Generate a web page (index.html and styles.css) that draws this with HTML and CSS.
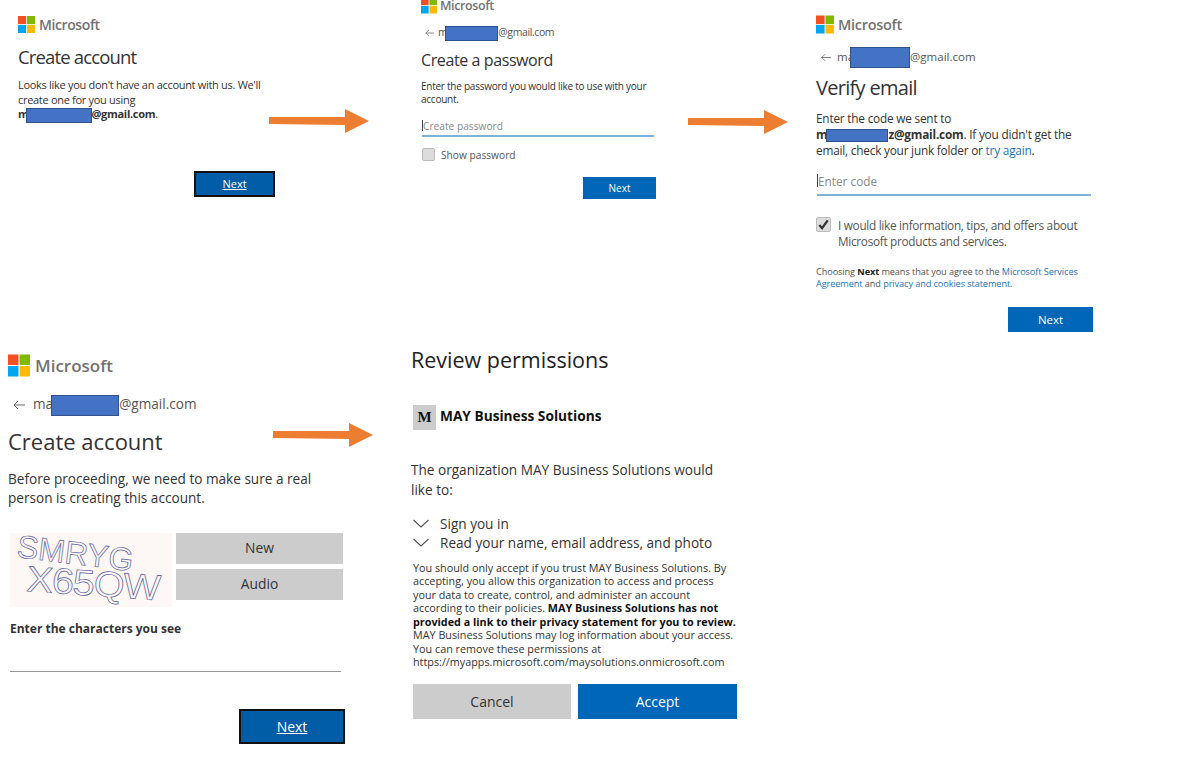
FILE: index.html
```html
<!DOCTYPE html>
<html lang="en">
<head>
    <meta charset="UTF-8">
    <meta name="viewport" content="width=device-width, initial-scale=1.0">
    <title>Account sign up steps</title>
    <link rel="stylesheet" href="styles.css">
</head>
<body>
    <!-- Step 1 -->
    <section class="panel panel-one">
        <div class="brand">
            <svg class="ms-logo" viewBox="0 0 21 21"><rect width="10" height="10" fill="#f25022"/><rect x="11" width="10" height="10" fill="#7fba00"/><rect y="11" width="10" height="10" fill="#00a4ef"/><rect x="11" y="11" width="10" height="10" fill="#ffb900"/></svg>
            <span>Microsoft</span>
        </div>
        <h1>Create account</h1>
        <p class="text">Looks like you don't have an account with us. We'll<br>create one for you using<br><b>m<span class="redact"></span>@gmail.com</b>.</p>
        <div class="actions"><a class="btn btn-outlined" href="#">Next</a></div>
    </section>

    <svg class="arrow arrow-one" viewBox="0 0 100 24"><path d="M0 8 L76 8 L76 0 L100 12 L76 24 L76 16 L0 15 Z" fill="#ed7d31"/></svg>

    <!-- Step 2 -->
    <section class="panel panel-two">
        <div class="brand">
            <svg class="ms-logo" viewBox="0 0 21 21"><rect width="10" height="10" fill="#f25022"/><rect x="11" width="10" height="10" fill="#7fba00"/><rect y="11" width="10" height="10" fill="#00a4ef"/><rect x="11" y="11" width="10" height="10" fill="#ffb900"/></svg>
            <span>Microsoft</span>
        </div>
        <div class="identity">
            <svg class="back" viewBox="0 0 12 10"><path d="M5 1 L1 5 L5 9 M1 5 H12" fill="none" stroke="#666" stroke-width="1"/></svg>
            <span>m<span class="redact"></span>@gmail.com</span>
        </div>
        <h1>Create a password</h1>
        <p class="text">Enter the password you would like to use with your<br>account.</p>
        <div class="field"><i class="caret"></i>Create password</div>
        <label class="check-row"><i class="check"></i>Show password</label>
        <div class="actions"><a class="btn" href="#">Next</a></div>
    </section>

    <svg class="arrow arrow-two" viewBox="0 0 100 24"><path d="M0 8 L76 8 L76 0 L100 12 L76 24 L76 16 L0 15 Z" fill="#ed7d31"/></svg>

    <!-- Step 3 -->
    <section class="panel panel-three">
        <div class="brand">
            <svg class="ms-logo" viewBox="0 0 21 21"><rect width="10" height="10" fill="#f25022"/><rect x="11" width="10" height="10" fill="#7fba00"/><rect y="11" width="10" height="10" fill="#00a4ef"/><rect x="11" y="11" width="10" height="10" fill="#ffb900"/></svg>
            <span>Microsoft</span>
        </div>
        <div class="identity">
            <svg class="back" viewBox="0 0 12 10"><path d="M5 1 L1 5 L5 9 M1 5 H12" fill="none" stroke="#666" stroke-width="1"/></svg>
            <span>ma<span class="redact"></span>@gmail.com</span>
        </div>
        <h1>Verify email</h1>
        <p class="text">Enter the code we sent to<br><b>m<span class="redact redact-small"></span>z@gmail.com</b>. If you didn't get the<br>email, check your junk folder or <a href="#">try again</a>.</p>
        <div class="field"><i class="caret"></i>Enter code</div>
        <label class="check-row">
            <i class="check checked"><svg viewBox="0 0 14 14"><path d="M2.5 7.5 L5.5 11 L11.5 2.5" fill="none" stroke="#333" stroke-width="2.4"/></svg></i>
            <span>I would like information, tips, and offers about<br>Microsoft products and services.</span>
        </label>
        <p class="legal">Choosing <b>Next</b> means that you agree to the <a href="#">Microsoft Services<br>Agreement</a> and <a href="#">privacy and cookies statement.</a></p>
        <div class="actions"><a class="btn" href="#">Next</a></div>
    </section>

    <!-- Step 4 -->
    <section class="panel panel-four">
        <div class="brand">
            <svg class="ms-logo" viewBox="0 0 21 21"><rect width="10" height="10" fill="#f25022"/><rect x="11" width="10" height="10" fill="#7fba00"/><rect y="11" width="10" height="10" fill="#00a4ef"/><rect x="11" y="11" width="10" height="10" fill="#ffb900"/></svg>
            <span>Microsoft</span>
        </div>
        <div class="identity">
            <svg class="back" viewBox="0 0 12 10"><path d="M5 1 L1 5 L5 9 M1 5 H12" fill="none" stroke="#666" stroke-width="1"/></svg>
            <span>ma<span class="redact"></span>@gmail.com</span>
        </div>
        <h1>Create account</h1>
        <p class="text">Before proceeding, we need to make sure a real<br>person is creating this account.</p>
        <div class="captcha-row">
            <svg class="captcha" viewBox="0 0 162 74">
                <rect width="162" height="74" fill="#fdf7f6"/>
                <text class="captcha-text" transform="translate(6 24) rotate(7)">SMRYG</text>
                <text class="captcha-text captcha-low" transform="translate(16 58) rotate(4) scale(1.1 1)" letter-spacing="-1">X65QW</text>
            </svg>
            <div class="captcha-buttons">
                <a class="btn-gray" href="#">New</a>
                <a class="btn-gray" href="#">Audio</a>
            </div>
        </div>
        <p class="captcha-label">Enter the characters you see</p>
        <div class="captcha-input"></div>
        <div class="actions"><a class="btn btn-outlined" href="#">Next</a></div>
    </section>

    <svg class="arrow arrow-three" viewBox="0 0 100 24"><path d="M0 8 L76 8 L76 0 L100 12 L76 24 L76 16 L0 15 Z" fill="#ed7d31"/></svg>

    <!-- Step 5 -->
    <section class="panel panel-five">
        <h1>Review permissions</h1>
        <div class="org">
            <span class="org-badge">M</span>
            <b>MAY Business Solutions</b>
        </div>
        <p class="text">The organization MAY Business Solutions would<br>like to:</p>
        <ul class="scopes">
            <li><svg viewBox="0 0 16 9"><path d="M0.5 1 L8 8 L15.5 1" fill="none" stroke="#555" stroke-width="1.1"/></svg>Sign you in</li>
            <li><svg viewBox="0 0 16 9"><path d="M0.5 1 L8 8 L15.5 1" fill="none" stroke="#555" stroke-width="1.1"/></svg>Read your name, email address, and photo</li>
        </ul>
        <p class="notice">You should only accept if you trust MAY Business Solutions. By<br>accepting, you allow this organization to access and process<br>your data to create, control, and administer an account<br>according to their policies. <b>MAY Business Solutions has not<br>provided a link to their privacy statement for you to review.</b><br>MAY Business Solutions may log information about your access.<br>You can remove these permissions at<br>https://myapps.microsoft.com/maysolutions.onmicrosoft.com</p>
        <div class="consent">
            <a class="consent-btn cancel" href="#">Cancel</a>
            <a class="consent-btn accept" href="#">Accept</a>
        </div>
    </section>
</body>
</html>
```

FILE: styles.css
```css
body {
    margin: 0;
    width: 1200px;
    height: 759px;
    position: relative;
    overflow: hidden;
    background: #fff;
    color: #333;
    font-family: "Open Sans", "Noto Sans", sans-serif;
}

/* Pasted screenshots on a free canvas */
.panel {
    position: absolute;
}

.arrow {
    position: absolute;
    width: 100px;
    height: 24px;
}

.arrow-one { left: 269px; top: 109px; }
.arrow-two { left: 688px; top: 110px; }
.arrow-three { left: 273px; top: 423px; }

a {
    color: #1b75b9;
    text-decoration: none;
}

h1 {
    margin: 0;
    font-weight: 400;
    white-space: nowrap;
}

p {
    margin: 0;
    white-space: nowrap;
}

.brand {
    display: flex;
    align-items: center;
    color: #737373;
    font-weight: 600;
    line-height: 1;
}

.identity {
    display: flex;
    align-items: center;
    color: #555;
    white-space: nowrap;
}

.back {
    flex: none;
}

.redact {
    display: inline-block;
    vertical-align: middle;
    background: #4472c4;
    border: 1px solid #2f528f;
    box-sizing: border-box;
}

.actions {
    display: flex;
    justify-content: flex-end;
}

.btn {
    display: flex;
    align-items: center;
    justify-content: center;
    background: #0067b8;
    color: #fff;
    box-sizing: border-box;
}

.btn-outlined {
    background: #005da6;
    border: 2px solid #111;
    text-decoration: underline;
}

.field {
    display: flex;
    align-items: center;
    color: #8a8a8a;
    box-sizing: border-box;
    border-bottom: 2px solid #7fb2d8;
}

.caret {
    width: 1px;
    height: 13px;
    background: #444;
}

.check-row {
    display: flex;
    align-items: center;
    color: #555;
    white-space: nowrap;
}

.check {
    flex: none;
    display: block;
    box-sizing: border-box;
    background: #dcdcdc;
    border: 1px solid #bbb;
    border-radius: 2px;
}

.check svg {
    display: block;
}

/* Step 1 */
.panel-one {
    left: 18px;
    top: 16px;
    width: 257px;
}

.panel-one .brand { font-size: 14px; letter-spacing: -0.4px; height: 17px; gap: 4px; }
.panel-one .ms-logo { width: 17px; height: 17px; }
.panel-one h1 { font-size: 18.5px; letter-spacing: -0.85px; line-height: 24px; margin-top: 12px; }
.panel-one .text { font-size: 11px; letter-spacing: -0.3px; line-height: 14.6px; margin-top: 9px; }
.panel-one .redact { width: 66px; height: 15px; margin-left: -3px; }
.panel-one .actions { margin-top: 48px; }
.panel-one .btn { width: 81px; height: 26px; font-size: 11px; }

/* Step 2, its top is cut by the canvas edge */
.panel-two {
    left: 421px;
    top: 0;
    width: 235px;
}

.panel-two .brand { font-size: 12.5px; letter-spacing: -0.4px; height: 14px; gap: 3px; align-items: flex-start; }
.panel-two .ms-logo { width: 16px; height: 17px; margin-top: -3px; }
.panel-two .identity { font-size: 10.5px; letter-spacing: -0.4px; height: 16px; margin-top: 11px; }
.panel-two .back { width: 9px; height: 8px; margin: 0 4px 0 4px; }
.panel-two .redact { width: 53px; height: 15px; margin-left: -2px; }
.panel-two h1 { font-size: 16px; letter-spacing: -0.4px; line-height: 22px; margin-top: 8px; }
.panel-two .text { font-size: 10px; letter-spacing: -0.25px; line-height: 13.4px; margin-top: 9px; }
.panel-two .field { margin: 10px 2px 0 1px; height: 20px; font-size: 10.2px; }
.panel-two .caret { height: 11px; }
.panel-two .check-row { font-size: 10.2px; gap: 6px; margin-top: 11px; margin-left: 1px; }
.panel-two .check { width: 13px; height: 13px; }
.panel-two .actions { margin-top: 15px; }
.panel-two .btn { width: 73px; height: 22px; font-size: 10px; }

/* Step 3 */
.panel-three {
    left: 816px;
    top: 15px;
    width: 277px;
}

.panel-three .brand { font-size: 14.5px; letter-spacing: -0.3px; height: 19px; gap: 4px; }
.panel-three .brand span { padding-top: 1px; }
.panel-three .ms-logo { width: 18px; height: 19px; }
.panel-three .identity { font-size: 11.5px; height: 18px; margin-top: 14px; }
.panel-three .back { width: 10px; height: 9px; margin: 0 6px 0 5px; }
.panel-three .redact { width: 60px; height: 21px; margin-left: -4px; }
.panel-three h1 { font-size: 20px; letter-spacing: -0.7px; line-height: 28px; margin-top: 8px; }
.panel-three .text { font-size: 11.8px; letter-spacing: -0.2px; line-height: 16px; margin-top: 8px; }
.panel-three .redact-small { width: 62px; height: 13px; margin-left: -1px; }
.panel-three .field { margin: 9px 2px 0 1px; height: 29px; font-size: 11.8px; }
.panel-three .check-row { align-items: flex-start; font-size: 11.8px; letter-spacing: -0.3px; line-height: 16px; gap: 7px; margin-top: 21px; }
.panel-three .check { width: 15px; height: 15px; }
.panel-three .legal { font-size: 9.2px; letter-spacing: -0.1px; line-height: 12px; margin-top: 17px; color: #555; }
.panel-three .legal b { color: #222; }
.panel-three .actions { margin-top: 17px; }
.panel-three .btn { width: 85px; height: 25px; font-size: 11.5px; }

/* Step 4 */
.panel-four {
    left: 8px;
    top: 354px;
    width: 337px;
}

.panel-four .brand { font-size: 17px; height: 23px; gap: 5px; }
.panel-four .ms-logo { width: 22px; height: 23px; }
.panel-four .identity { font-size: 13.6px; height: 22px; margin-top: 17px; }
.panel-four .back { width: 12px; height: 10px; margin: 0 8px 0 5px; }
.panel-four .redact { width: 68px; height: 21px; margin-left: -2px; }
.panel-four h1 { font-size: 22px; line-height: 30px; margin-top: 10px; }
.panel-four .text { font-size: 13.6px; line-height: 19px; margin-top: 13px; }

.captcha-row {
    display: flex;
    gap: 4px;
    margin: 26px 2px 0 2px;
}

.captcha {
    width: 162px;
    height: 74px;
    flex: none;
}

.captcha-text {
    font-family: "Liberation Sans", sans-serif;
    font-size: 32px;
    fill: none;
    stroke: #5a5f9e;
    stroke-width: 0.7;
}

.captcha-low {
    font-size: 36px;
}

.captcha-buttons {
    flex: 1;
    display: flex;
    flex-direction: column;
    gap: 5px;
}

.btn-gray {
    height: 31px;
    box-sizing: border-box;
    padding-bottom: 2px;
    display: flex;
    align-items: center;
    justify-content: center;
    background: #ccc;
    color: #333;
    font-size: 13.8px;
}

.captcha-label {
    margin: 14px 0 0 2px;
    font-size: 12px;
    line-height: 16px;
    font-weight: 700;
}

.captcha-input {
    margin: 33px 4px 0 2px;
    height: 1px;
    border-bottom: 1px solid #999;
}

.panel-four .actions { margin-top: 37px; }
.panel-four .btn { width: 106px; height: 35px; font-size: 14px; }

/* Step 5 */
.panel-five {
    left: 411px;
    top: 345px;
    width: 326px;
}

.panel-five h1 { font-size: 21.5px; line-height: 30px; color: #222; }

.org {
    display: flex;
    align-items: center;
    gap: 4px;
    margin: 30px 0 0 2px;
    font-size: 13.7px;
    color: #111;
}

.org b {
    margin-bottom: 4px;
}

.org-badge {
    width: 23px;
    height: 25px;
    display: flex;
    align-items: center;
    justify-content: center;
    background: #ccc;
    font-family: "Liberation Serif", serif;
    font-weight: 700;
    font-size: 15px;
}

.panel-five .text { font-size: 13.6px; line-height: 20px; margin-top: 30px; }

.scopes {
    list-style: none;
    margin: 14px 0 0 2px;
    padding: 0;
    font-size: 13.6px;
    line-height: 19px;
}

.scopes li {
    display: flex;
    align-items: center;
    gap: 11px;
    white-space: nowrap;
}

.scopes svg {
    width: 16px;
    height: 9px;
    flex: none;
}

.notice {
    margin: 9px 0 0 2px;
    font-size: 10.8px;
    line-height: 13.43px;
}

.notice b {
    color: #111;
}

.consent {
    display: flex;
    gap: 7px;
    margin: 15px 0 0 2px;
}

.consent-btn {
    height: 35px;
    display: flex;
    align-items: center;
    justify-content: center;
    font-size: 14px;
}

.cancel {
    width: 158px;
    background: #ccc;
    color: #333;
}

.accept {
    width: 159px;
    background: #0067b8;
    color: #fff;
}
```
